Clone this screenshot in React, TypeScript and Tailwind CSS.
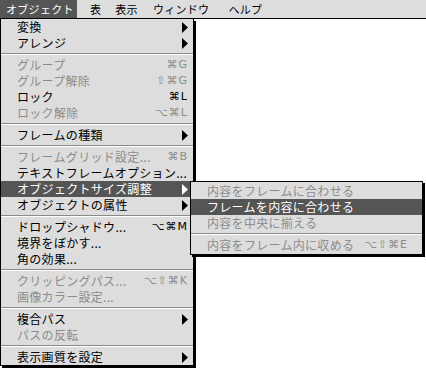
import React from "react";

type Item =
  | { sep: true }
  | {
      label: string;
      shortcut?: string;
      disabled?: boolean;
      sub?: boolean;
      active?: boolean;
    };

const font = { fontFamily: '"Noto Sans CJK JP", "DejaVu Sans", sans-serif' };

const mainItems: Item[] = [
  { label: "変換", sub: true },
  { label: "アレンジ", sub: true },
  { sep: true },
  { label: "グループ", shortcut: "⌘G", disabled: true },
  { label: "グループ解除", shortcut: "⇧⌘G", disabled: true },
  { label: "ロック", shortcut: "⌘L" },
  { label: "ロック解除", shortcut: "⌥⌘L", disabled: true },
  { sep: true },
  { label: "フレームの種類", sub: true },
  { sep: true },
  { label: "フレームグリッド設定...", shortcut: "⌘B", disabled: true },
  { label: "テキストフレームオプション..." },
  { label: "オブジェクトサイズ調整", sub: true, active: true },
  { label: "オブジェクトの属性", sub: true },
  { sep: true },
  { label: "ドロップシャドウ...", shortcut: "⌥⌘M" },
  { label: "境界をぼかす..." },
  { label: "角の効果..." },
  { sep: true },
  { label: "クリッピングパス...", shortcut: "⌥⇧⌘K", disabled: true },
  { label: "画像カラー設定...", disabled: true },
  { sep: true },
  { label: "複合パス", sub: true },
  { label: "パスの反転", disabled: true },
  { sep: true },
  { label: "表示画質を設定", sub: true },
];

const subItems: Item[] = [
  { label: "内容をフレームに合わせる", disabled: true },
  { label: "フレームを内容に合わせる", active: true },
  { label: "内容を中央に揃える", disabled: true },
  { sep: true },
  { label: "内容をフレーム内に収める", shortcut: "⌥⇧⌘E", disabled: true },
];

function Arrow({ white }: { white?: boolean }) {
  return (
    <svg width="6" height="11" viewBox="0 0 6 11" className="shrink-0">
      <path d="M0 0 L6 5.5 L0 11 Z" fill={white ? "#fff" : "#000"} />
    </svg>
  );
}

function Row({ item, pl, pr }: { item: Item; pl: string; pr: string }) {
  if ("sep" in item) {
    return (
      <div className="h-[6px] flex flex-col justify-center">
        <div className="h-px bg-[#8a8a8a]" />
        <div className="h-px bg-white" />
      </div>
    );
  }
  const color = item.active
    ? "text-white bg-[#555555]"
    : item.disabled
    ? "text-[#8c8c8c]"
    : "text-black";
  return (
    <div className={`h-[16px] flex items-center justify-between ${pl} ${pr} ${color}`}>
      <span className="text-[12px] leading-[16px] tracking-[0.3px] whitespace-nowrap">{item.label}</span>
      {item.sub ? (
        <Arrow white={item.active} />
      ) : item.shortcut ? (
        <span
          className="text-[11px] leading-[16px] tracking-[1px] whitespace-nowrap"
          style={{ fontFamily: '"DejaVu Sans", "Noto Sans CJK JP", sans-serif' }}
        >
          {item.shortcut}
        </span>
      ) : null}
    </div>
  );
}

export default function App() {
  return (
    <div className="relative w-[426px] h-[368px] bg-white overflow-hidden" style={font}>
      <div className="h-[19px] bg-[#dddddd] border-b border-black flex items-stretch text-[11px] tracking-[0.3px] text-black">
        <div className="w-[77px] pl-[6px] bg-[#555555] text-white flex items-center">オブジェクト</div>
        <div className="ml-[13px] flex items-center">表</div>
        <div className="ml-[14px] flex items-center">表示</div>
        <div className="ml-[15px] flex items-center">ウィンドウ</div>
        <div className="ml-[19px] flex items-center">ヘルプ</div>
      </div>

      <div className="absolute left-0 top-[19px] w-[194px] bg-[#dddddd] border-l border-r border-b border-black shadow-[2px_2px_0_#000]">
        {mainItems.map((it, i) => (
          <Row key={i} item={it} pl="pl-[16px]" pr="pr-[5px]" />
        ))}
      </div>

      <div className="absolute left-[190px] top-[181px] w-[233px] bg-[#dddddd] border border-black shadow-[2px_2px_0_#000] py-px">
        {subItems.map((it, i) => (
          <Row key={i} item={it} pl="pl-[16px]" pr="pr-[14px]" />
        ))}
      </div>
    </div>
  );
}
